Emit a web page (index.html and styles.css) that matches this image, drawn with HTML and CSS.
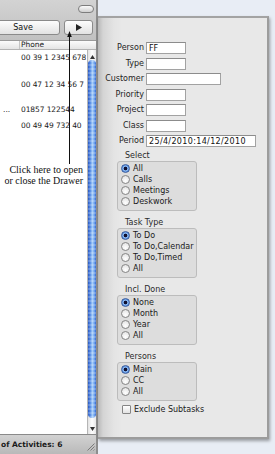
FILE: index.html
```html
<!DOCTYPE html>
<html lang="en">
<head>
    <meta charset="UTF-8">
    <meta name="viewport" content="width=device-width, initial-scale=1.0">
    <title>Activities Drawer</title>
    <link rel="stylesheet" href="styles.css">
</head>
<body>
<div class="screen">
    <div class="window">
        <div class="titlebar"><span class="pill"></span></div>
        <div class="toolbar">
            <button class="btn save">Save</button>
            <button class="btn toggle">
                <svg width="6" height="7" viewBox="0 0 6 7"><polygon points="0,0 6,3.5 0,7" fill="#222"/></svg>
            </button>
        </div>
        <div class="table">
            <div class="table-head">
                <div class="col-first"></div>
                <div class="col-phone">Phone</div>
            </div>
            <div class="table-body">
                <div class="rows">
                    <div class="row r1"><span class="col-first"></span><span class="col-phone">00 39 1 2345 678</span></div>
                    <div class="row r2"><span class="col-first"></span><span class="col-phone">00 47 12 34 56 7</span></div>
                    <div class="row r3"><span class="col-first">...</span><span class="col-phone">01857 122544</span></div>
                    <div class="row r3"><span class="col-first"></span><span class="col-phone">00 49 49 732 40</span></div>
                </div>
                <div class="scrollbar">
                    <div class="arrow"><svg width="5" height="4" viewBox="0 0 5 4"><polygon points="2.5,0 5,4 0,4" fill="#333"/></svg></div>
                    <div class="thumb"></div>
                    <div class="track-end"></div>
                    <div class="arrow"><svg width="5" height="4" viewBox="0 0 5 4"><polygon points="0,0 5,0 2.5,4" fill="#333"/></svg></div>
                </div>
            </div>
        </div>
        <div class="statusbar">
            <span class="status-text">of Activities: 6</span>
            <svg class="grip" width="9" height="9" viewBox="0 0 9 9">
                <path d="M8.5 1.5 L1.5 8.5 M8.5 4.5 L4.5 8.5 M8.5 7.5 L7.5 8.5" stroke="#7a7a7a" stroke-width="1"/>
            </svg>
        </div>
    </div>

    <div class="drawer-area">
        <div class="drawer">
            <div class="fields">
                <label>Person</label><input class="w40" value="FF">
                <label>Type</label><input class="w40">
                <label>Customer</label><input class="w75">
                <label>Priority</label><input class="w40">
                <label>Project</label><input class="w40">
                <label>Class</label><input class="w40">
                <label>Period</label><input class="w110 period" value="25/4/2010:14/12/2010">
            </div>

            <div class="group first">
                <div class="group-title">Select</div>
                <div class="group-box">
                    <div class="opt"><span class="radio on"></span>All</div>
                    <div class="opt"><span class="radio"></span>Calls</div>
                    <div class="opt"><span class="radio"></span>Meetings</div>
                    <div class="opt"><span class="radio"></span>Deskwork</div>
                </div>
            </div>

            <div class="group">
                <div class="group-title">Task Type</div>
                <div class="group-box">
                    <div class="opt"><span class="radio on"></span>To Do</div>
                    <div class="opt"><span class="radio"></span>To Do,Calendar</div>
                    <div class="opt"><span class="radio"></span>To Do,Timed</div>
                    <div class="opt"><span class="radio"></span>All</div>
                </div>
            </div>

            <div class="group">
                <div class="group-title">Incl. Done</div>
                <div class="group-box">
                    <div class="opt"><span class="radio on"></span>None</div>
                    <div class="opt"><span class="radio"></span>Month</div>
                    <div class="opt"><span class="radio"></span>Year</div>
                    <div class="opt"><span class="radio"></span>All</div>
                </div>
            </div>

            <div class="group">
                <div class="group-title">Persons</div>
                <div class="group-box">
                    <div class="opt"><span class="radio on"></span>Main</div>
                    <div class="opt"><span class="radio"></span>CC</div>
                    <div class="opt"><span class="radio"></span>All</div>
                </div>
            </div>

            <div class="check"><span class="checkbox"></span>Exclude Subtasks</div>
        </div>
    </div>

    <!-- annotation over the screenshot -->
    <svg class="callout-line" width="7" height="133" viewBox="0 0 7 133">
        <polygon points="3.5,0 1.2,6 5.8,6" fill="#111"/>
        <line x1="3.5" y1="5" x2="3.5" y2="133" stroke="#111" stroke-width="1"/>
    </svg>
    <div class="callout-text">Click here to open<br>or close the Drawer</div>
</div>
</body>
</html>
```

FILE: styles.css
```css
* {
    box-sizing: border-box;
}

body {
    margin: 0;
    width: 275px;
    height: 454px;
    overflow: hidden;
    background-color: #e8edf5; /* desktop behind the windows */
    font-family: 'DejaVu Sans', Verdana, sans-serif;
    font-size: 8px;
    color: #1a1a1a;
}

.screen {
    position: relative;
    display: flex;
    height: 454px;
}

/* main window */
.window {
    width: 98px;
    height: 454px;
    display: flex;
    flex-direction: column;
    background: linear-gradient(#d3d3d3, #c1c1c1 40px);
    border-right: 2px solid #8e8e8e;
}

.titlebar {
    height: 15px;
    display: flex;
    justify-content: flex-end;
    padding: 5px 2px 0 0;
}

.pill {
    width: 16px;
    height: 8px;
    border-radius: 4px;
    border: 1px solid #7d7d7d;
    background: linear-gradient(#fbfbfb, #cfcfcf);
}

.toolbar {
    height: 25px;
    display: flex;
    gap: 4px;
    padding-top: 5px;
}

.btn {
    height: 15px;
    padding: 0;
    border: 1px solid #8a8a8a;
    border-radius: 3px;
    background: linear-gradient(#fdfdfd, #e2e2e2);
    font-family: inherit;
    font-size: 8px;
    color: #111;
    display: flex;
    align-items: center;
    justify-content: center;
}

.btn.save {
    width: 74px;
    margin-left: -14px;
}

.btn.toggle {
    width: 29px;
}

.table {
    flex: 1;
    display: flex;
    flex-direction: column;
    background: white;
}

.table-head {
    height: 10px;
    display: flex;
    border-top: 1px solid #9a9a9a;
    border-bottom: 1px solid #b3b3b3;
    background: linear-gradient(#fbfbfb, #e4e4e4);
    font-size: 7.5px;
    line-height: 8px;
}

.col-first {
    width: 20px;
    flex: none;
    border-right: 1px solid #c4c4c4;
    padding-left: 3px;
}

.col-phone {
    padding-left: 1px;
    white-space: nowrap;
    overflow: hidden;
    text-overflow: ellipsis;
}

.table-body {
    flex: 1;
    display: flex;
}

.rows {
    flex: 1;
    overflow: hidden;
    padding-top: 2px;
    font-size: 7.5px;
    line-height: 11px;
}

.row {
    display: flex;
}

.row .col-first {
    border-right: 1px solid transparent;
}

.row .col-phone {
    letter-spacing: -0.1px;
}

.row.r1 {
    height: 27px;
}

.row.r2 {
    height: 25px;
}

.row.r3 {
    height: 16px;
}

.scrollbar {
    width: 9px;
    flex: none;
    display: flex;
    flex-direction: column;
    padding: 4px 0 2px 0;
    border-left: 1px solid #b5b5b5;
    background: linear-gradient(to right, #e2e2e2, #fdfdfd 50%, #e8e8e8);
}

.arrow {
    height: 6px;
    display: flex;
    justify-content: center;
    align-items: center;
}

.thumb {
    flex: 1;
    border-radius: 4px;
    background:
        repeating-linear-gradient(to bottom, rgba(255, 255, 255, 0.2) 0 2px, rgba(255, 255, 255, 0) 2px 4px),
        linear-gradient(to right, #2858c2, #5a90e6 30%, #a9cff8 55%, #6ca1ec 80%, #3466cf);
}

.track-end {
    height: 8px;
}

.statusbar {
    height: 20px;
    display: flex;
    justify-content: space-between;
    align-items: center;
    padding: 0 1px 0 1px;
    border-top: 1px solid #8a8a8a;
    background: linear-gradient(#d2d2d2, #b9b9b9);
}

.status-text {
    font-weight: bold;
    font-size: 7.5px;
}

.grip {
    align-self: flex-end;
    margin-bottom: 3px;
}

/* drawer */
.drawer-area {
    flex: 1;
    padding-top: 16px;
}

.drawer {
    width: 171px;
    height: 423px;
    padding-top: 24px;
    border-top: 2px solid #a3a3a3;
    border-right: 2px solid #9c9c9c;
    border-bottom: 2px solid #9c9c9c;
    background: linear-gradient(to right, #b8b8b8 0, #d4d4d4 5px, #e4e4e4 16px, #e8e8e8 24px);
    box-shadow: 1px 2px 3px rgba(0, 0, 0, 0.35);
}

.fields {
    display: grid;
    grid-template-columns: 46px auto;
    grid-auto-rows: 12px;
    column-gap: 2px;
    row-gap: 3.5px;
}

.fields label {
    text-align: right;
    line-height: 12px;
    color: #1e1e1e;
}

.fields input {
    height: 12px;
    padding: 0 2px;
    border: 1px solid #a2a2a2;
    border-top-color: #8c8c8c;
    background: white;
    font-family: inherit;
    font-size: 8px;
    color: #111;
    outline: none;
}

.w40 {
    width: 40px;
}

.w75 {
    width: 75px;
}

.w110 {
    width: 110px;
}

.period {
    letter-spacing: 0.35px;
}

.group {
    margin: 7px 0 0 19px;
}

.group.first {
    margin-top: 4px;
}

.group-title {
    height: 10px;
    line-height: 10px;
    padding-left: 8px;
    color: #2a2a2a;
}

.group-box {
    width: 80px;
    padding: 1px 0 3px 3px;
    border: 1px solid #bcbcbc;
    border-radius: 3px;
    background-color: #dddddd;
}

.opt {
    height: 11px;
    display: flex;
    align-items: center;
    gap: 3px;
}

.radio {
    width: 9px;
    height: 9px;
    flex: none;
    border-radius: 50%;
    border: 1px solid #858585;
    background: radial-gradient(circle at 50% 70%, #ffffff, #dedede);
}

.radio.on {
    border-color: #3a5c9c;
    background: radial-gradient(circle, #101030 0 1.5px, #8ab9f2 2.2px, #3a76d6 4.5px);
}

.check {
    margin: 3px 0 0 24px;
    height: 11px;
    display: flex;
    align-items: center;
    gap: 3px;
}

.checkbox {
    width: 9px;
    height: 9px;
    border: 1px solid #858585;
    border-radius: 1px;
    background: linear-gradient(#ffffff, #e2e2e2);
}

/* annotation */
.callout-line {
    position: absolute;
    left: 66px;
    top: 31px;
}

.callout-text {
    position: absolute;
    left: 0;
    top: 164px;
    width: 83px;
    text-align: right;
    font-family: 'Liberation Serif', 'Times New Roman', serif;
    font-size: 10px;
    line-height: 11px;
    color: #111;
}
```
